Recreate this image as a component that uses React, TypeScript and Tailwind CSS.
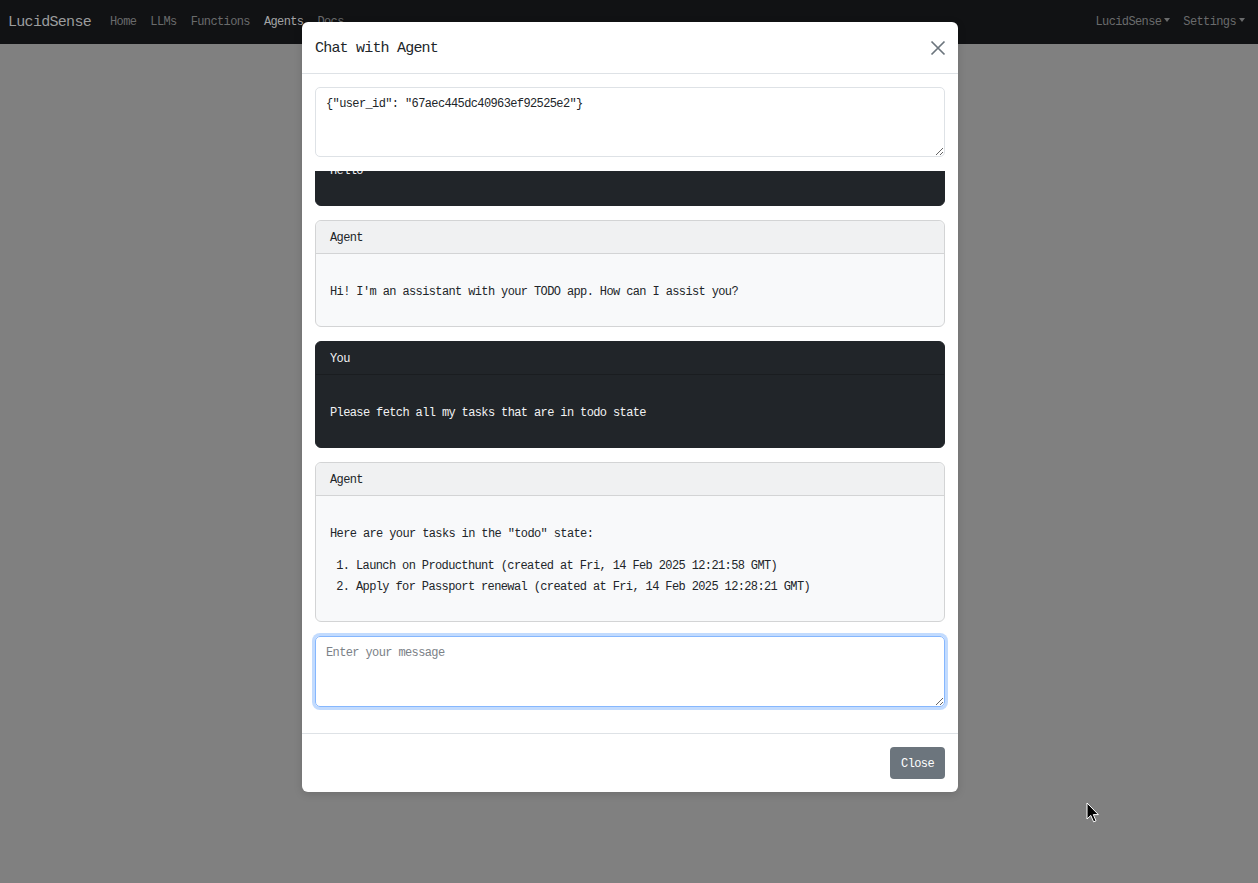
import type { ReactNode } from 'react'

const mono = "font-['Liberation_Mono','DejaVu_Sans_Mono',monospace]"

function Message({ who, children }: { who: string; children: ReactNode }) {
  const dark = who === 'You'
  return (
    <div
      className={
        dark
          ? 'shrink-0 rounded-[6px] border border-[#212529] bg-[#212529] text-[#f1f2f3]'
          : 'shrink-0 rounded-[6px] border border-[#d3d4d5] bg-[#f8f9fa] text-[#212529]'
      }
    >
      <div
        className={
          dark
            ? 'flex h-[33px] items-center border-b border-[#1a1d20] px-[14px] pt-[3px]'
            : 'flex h-[33px] items-center rounded-t-[6px] border-b border-[#d3d4d5] bg-[#f0f1f2] px-[14px] pt-[3px]'
        }
      >
        {who}
      </div>
      <div className="px-[14px] pt-[28px] pb-[23px]">{children}</div>
    </div>
  )
}

function Caret() {
  return <span className="ml-[3px] inline-block h-0 w-0 border-x-[3.5px] border-t-[4px] border-x-transparent border-t-current align-[3px]" />
}

export default function App() {
  return (
    <div className={`relative h-[883px] w-[1258px] overflow-hidden bg-[#808080] ${mono} text-[12px] leading-[21px] tracking-[-0.62px]`}>
      {/* navbar, dimmed by the modal backdrop */}
      <nav className="flex h-[44px] items-center bg-[#111214] pl-[8px] pr-[13px]">
        <span className="text-[15px] tracking-[-0.7px] text-[#9c9d9e]">LucidSense</span>
        <ul className="ml-[12px] flex items-center pt-[1px] text-[#6a6b6c]">
          <li className="px-[7px]">Home</li>
          <li className="px-[7px]">LLMs</li>
          <li className="px-[7px]">Functions</li>
          <li className="px-[7px] text-[#a3a4a5]">Agents</li>
          <li className="px-[7px]">Docs</li>
        </ul>
        <div className="ml-auto flex items-center gap-[13px] pt-[1px] text-[#6a6b6c]">
          <span>
            LucidSense
            <Caret />
          </span>
          <span>
            Settings
            <Caret />
          </span>
        </div>
      </nav>

      {/* modal */}
      <div className="absolute left-[302px] top-[22px] w-[656px] rounded-[6px] bg-white text-[#212529] shadow-[0_2px_8px_rgba(0,0,0,0.15)]">
        <div className="flex h-[52px] items-center justify-between border-b border-[#dee2e6] px-[13px] pt-[2px]">
          <h5 className="text-[15px] tracking-[-0.8px] text-[#212529]">Chat with Agent</h5>
          <svg width="16" height="16" viewBox="0 0 16 16" className="mr-[-1px] mb-[2px]">
            <path d="M1.5 1.5 14.5 14.5M14.5 1.5 1.5 14.5" stroke="#6c757d" strokeWidth="1.7" />
          </svg>
        </div>

        <div className="p-[13px]">
          <textarea
            readOnly
            defaultValue={'{"user_id": "67aec445dc40963ef92525e2"}'}
            className={`block h-[70px] w-full rounded-[5px] border border-[#dee2e6] px-[10px] pt-[6px] ${mono} text-[12px] leading-[21px] tracking-[-0.62px] text-[#212529] outline-none`}
          />

          <div className="mt-[14px] flex h-[451px] flex-col justify-end gap-[14px] overflow-hidden">
            <Message who="You">
              <p>Hello</p>
            </Message>
            <Message who="Agent">
              <p>Hi! I'm an assistant with your TODO app. How can I assist you?</p>
            </Message>
            <Message who="You">
              <p>Please fetch all my tasks that are in todo state</p>
            </Message>
            <Message who="Agent">
              <p>Here are your tasks in the "todo" state:</p>
              <ol className="mt-[11px] list-decimal pl-[26px]">
                <li>Launch on Producthunt (created at Fri, 14 Feb 2025 12:21:58 GMT)</li>
                <li>Apply for Passport renewal (created at Fri, 14 Feb 2025 12:28:21 GMT)</li>
              </ol>
            </Message>
          </div>

          <textarea
            placeholder="Enter your message"
            className={`mt-[14px] mb-[13px] block h-[71px] w-full rounded-[5px] border border-[#86b7fe] px-[10px] pt-[6px] ${mono} text-[12px] leading-[21px] tracking-[-0.62px] text-[#212529] shadow-[0_0_0_3px_rgba(13,110,253,0.25)] outline-none placeholder:text-[#7b8187]`}
          />
        </div>

        <div className="flex justify-end border-t border-[#dee2e6] p-[13px]">
          <button className="h-[32px] rounded-[4px] bg-[#6c757d] px-[11px] pt-[2px] text-[12px] text-white">Close</button>
        </div>
      </div>

      {/* mouse pointer */}
      <svg className="absolute left-[1086px] top-[802px]" width="14" height="22" viewBox="0 0 14 22">
        <path d="M1 1 1 17 4.8 13.4 7.6 19.8 10 18.8 7.3 12.6 12.4 12.6Z" fill="#000" stroke="#fff" strokeWidth="1" />
      </svg>
    </div>
  )
}
